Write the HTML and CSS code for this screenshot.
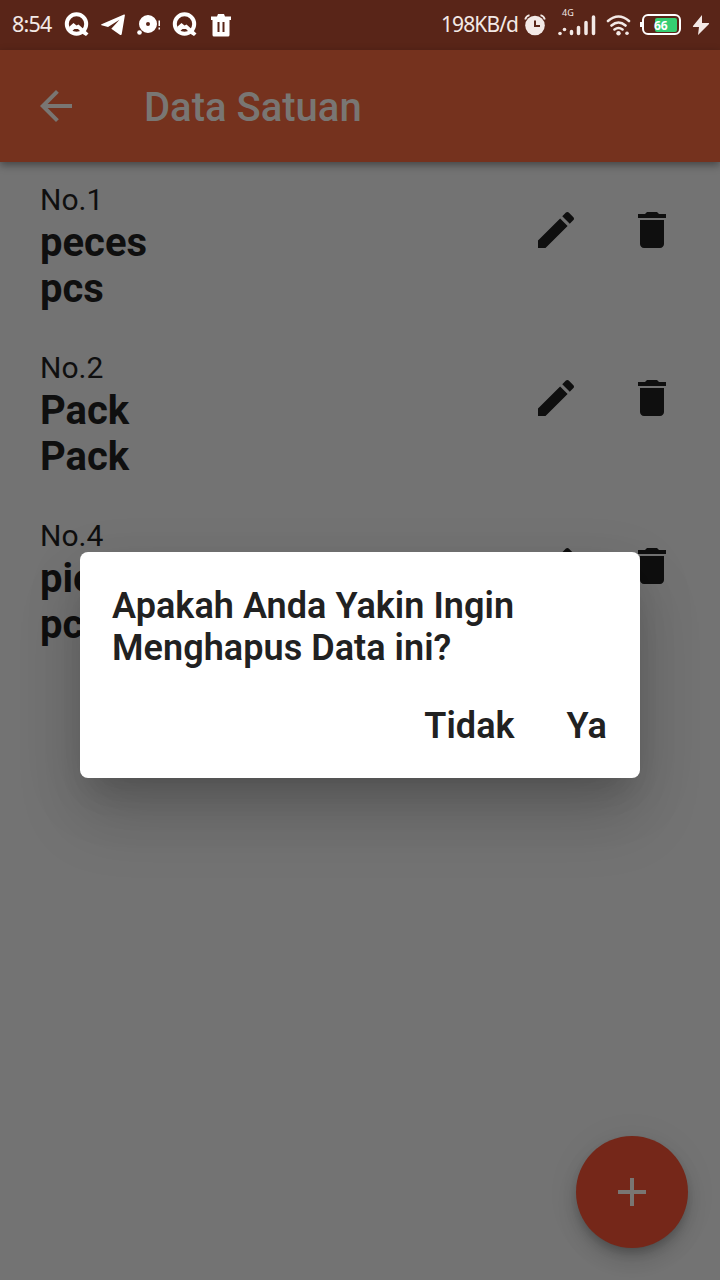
FILE: index.html
```html
<!DOCTYPE html>
<html lang="id">
<head>
<meta charset="utf-8">
<title>Data Satuan</title>
<link rel="stylesheet" href="styles.css">
</head>
<body>
<svg class="symbols" width="0" height="0">
  <symbol id="edit" viewBox="0 0 24 24"><path d="M3 17.25V21h3.75L17.81 9.94l-3.75-3.75L3 17.25zM20.71 7.04c.39-.39.39-1.02 0-1.41l-2.34-2.34c-.39-.39-1.02-.39-1.41 0l-1.83 1.83 3.75 3.75 1.83-1.83z"/></symbol>
  <symbol id="delete" viewBox="0 0 24 24"><path d="M6 19c0 1.100.9 2 2 2h8c1.100 0 2-.9 2-2V7H6v12zM19 4h-3.500l-1-1h-5l-1 1H5v2h14V4z"/></symbol>
  <symbol id="quick" viewBox="0 0 26 26"><circle cx="12.500" cy="12" r="9.700" fill="none" stroke="currentColor" stroke-width="4"/><path d="M5 15l4.500-4 3 2.500 2-1 10 9-2.500 2.500-2.500-1.500-5.500-5.500-3.500 0-3 2.500z"/></symbol>
</svg>
<div class="screen">
  <header class="status">
    <div class="status-left">
      <span class="clock">8:54</span>
      <svg class="q" width="26" height="26"><use href="#quick"/></svg>
      <svg class="plane" width="24" height="22" viewBox="0 0 24 22"><path d="M.5 10.200L23 .5q1-.3.900.7L20.700 20.300q-.3 1.200-1.500.6L10.300 14.800 18.500 5.800 7 13 .5 11.200q-.8-.5 0-1z"/></svg>
      <svg class="disc" width="24" height="20" viewBox="0 0 24 20"><path fill-rule="evenodd" d="M11 0a9 9 0 1 1 0 18a9 9 0 0 1 0-18zM11 7a2 2 0 1 0 0 4a2 2 0 0 0 0-4z"/><circle cx="2.500" cy="17.500" r="2.300"/><path d="M21.500 5.500H23V11h-1.500zM21.500 12.500H23v2h-1.500z"/></svg>
      <svg class="q" width="26" height="26"><use href="#quick"/></svg>
      <svg class="bin" width="20" height="23" viewBox="0 0 20 23"><path fill-rule="evenodd" d="M0 2.500h6L7 0h6l1 2.500h6v3.500h-1.500v15q0 1.500-1.500 1.500H3Q1.500 22.500 1.500 21V6H0zM6.500 8v10h2V8zM11.500 8v10h2V8z"/></svg>
    </div>
    <div class="status-right">
      <span class="speed">198KB/d</span>
      <svg width="22" height="22" viewBox="0 0 22 22"><circle cx="11" cy="11.500" r="9.800"/><path d="M1.200 5.500Q2 2 5.500 1.200M20.800 5.500Q20 2 16.500 1.200" fill="none" stroke="currentColor" stroke-width="1.800"/><path d="M11 6.500v5.500h5" fill="none" stroke="#592518" stroke-width="2"/></svg>
      <div class="signal">
        <span>4G</span>
        <svg width="38" height="21" viewBox="0 0 38 21"><circle cx="2" cy="18.500" r="1.800"/><circle cx="6.500" cy="14.500" r="1.800"/><path d="M13.500 16.500v2M20.500 12.500v6M28 7.500v11M35.500 2v16.500" stroke="currentColor" stroke-width="3.500" stroke-linecap="round"/></svg>
      </div>
      <svg class="wifi" width="26" height="21" viewBox="0 0 26 21"><g fill="none" stroke="currentColor" stroke-width="2.600" stroke-linecap="round"><path d="M2 6Q12.500-3 23 6M5.500 10.500q7-6 14 0M8.500 14.500q4-3 8 0"/></g><circle cx="12.500" cy="18.300" r="2.200"/><circle cx="21" cy="18.300" r="1.800"/></svg>
      <div class="battery"><div class="level">66</div></div>
      <svg class="bolt" width="18" height="20" viewBox="0 0 18 20"><path d="M10 0L1 11q-.5 1 .5 1H7L6 20 17 9q.5-1-.5-1H10z"/></svg>
    </div>
  </header>
  <div class="appbar">
    <svg width="48" height="48" viewBox="0 0 24 24"><path d="M20 11H7.830l5.590-5.590L12 4l-8 8 8 8 1.410-1.410L7.830 13H20v-2z"/></svg>
    <h1>Data Satuan</h1>
  </div>
  <main class="list">
    <div class="item"><div class="text"><p>No.1</p><b>peces</b><b>pcs</b></div><svg><use href="#edit"/></svg><svg><use href="#delete"/></svg></div>
    <div class="item"><div class="text"><p>No.2</p><b>Pack</b><b>Pack</b></div><svg><use href="#edit"/></svg><svg><use href="#delete"/></svg></div>
    <div class="item"><div class="text"><p>No.4</p><b>pieces</b><b>pcs</b></div><svg><use href="#edit"/></svg><svg><use href="#delete"/></svg></div>
  </main>
  <div class="dialog">
    <p>Apakah Anda Yakin Ingin<br>Menghapus Data ini?</p>
    <div class="actions"><span>Tidak</span><span>Ya</span></div>
  </div>
  <div class="fab"><svg width="48" height="48" viewBox="0 0 24 24"><path d="M19 13h-6v6h-2v-6H5v-2h6V5h2v6h6v2z"/></svg></div>
</div>
</body>
</html>
```
FILE: styles.css
```css
* { box-sizing: border-box; }
body { margin: 0; }
p, h1 { margin: 0; }
svg { display: block; flex: none; fill: currentColor; }
.symbols { position: absolute; }
.screen {
  position: relative;
  width: 720px;
  height: 1280px;
  overflow: hidden;
  background: #737373;
  color: #0f0f0f;
  font-family: Roboto, sans-serif;
}
.status {
  display: flex;
  justify-content: space-between;
  height: 50px;
  padding: 0 10px 0 12px;
  background: #592518;
  color: #f3e9e6;
  font-family: "Noto Sans", sans-serif;
}
.status-left, .status-right { display: flex; align-items: center; }
.status-left svg { color: #fff; }
.clock { width: 52px; margin-top: -2px; font-size: 21.500px; letter-spacing: -0.800px; line-height: 28px; }
.plane { margin-left: 11px; }
.disc { margin: 0 11px 0 12px; }
.bin { margin-left: 13px; }
.speed { width: 83px; font-size: 21px; letter-spacing: -0.900px; line-height: 28px; margin-top: -2px; white-space: nowrap; }
.signal { position: relative; margin: 0 10px 0 12px; }
.signal span { position: absolute; left: 4px; top: -7px; font-size: 9px; line-height: 10px; }
.battery {
  position: relative;
  width: 39px;
  height: 21px;
  margin: -1px 11px 0 10px;
  padding: 2px;
  border: 2px solid #fff;
  border-radius: 6px;
}
.battery::before {
  content: "";
  position: absolute;
  left: -4px;
  top: 6px;
  width: 2px;
  height: 5px;
  background: #fff;
}
.level {
  width: 22px;
  height: 14px;
  margin: -0.500px 0 0 9px;
  border-radius: 2px;
  background: #35ce72;
  color: #fff;
  font-size: 12px;
  font-weight: 700;
  line-height: 15px;
  text-indent: -1px;
}
.appbar {
  position: relative;
  display: flex;
  align-items: center;
  gap: 64px;
  height: 112px;
  padding-left: 32px;
  background: #75321e;
  color: #797673;
  box-shadow: 0 3px 8px rgba(0, 0, 0, .4);
}
.appbar h1 { font-size: 40px; font-weight: 500; line-height: 48px; padding-top: 3px; }
.list { padding-top: 20px; }
.item { display: flex; height: 168px; padding: 0 44px 0 40px; }
.item .text { flex: 1; }
.item p { font-size: 30px; line-height: 36px; margin-bottom: 2px; }
.item b { display: block; font-size: 40px; line-height: 46px; }
.item svg { width: 48px; height: 48px; margin-top: 24px; }
.item svg + svg { margin-left: 48px; }
.dialog {
  position: absolute;
  left: 80px;
  top: 552px;
  width: 560px;
  height: 226px;
  padding: 33px 33px 31px 32px;
  border-radius: 8px;
  background: #fff;
  color: #212121;
  font-size: 36px;
  font-weight: 600;
  letter-spacing: .05px;
  line-height: 42px;
  box-shadow: 0 22px 30px -14px rgba(0, 0, 0, .15), 0 40px 66px 0 rgba(0, 0, 0, .14), 0 18px 60px 4px rgba(0, 0, 0, .08);
}
.actions { display: flex; justify-content: flex-end; gap: 52px; margin-top: 36px; }
.fab {
  position: absolute;
  right: 32px;
  bottom: 32px;
  display: grid;
  place-items: center;
  width: 112px;
  height: 112px;
  border-radius: 50%;
  background: #752719;
  color: #797673;
  box-shadow: 0 6px 10px -2px rgba(0, 0, 0, .2), 0 12px 20px rgba(0, 0, 0, .14), 0 2px 36px rgba(0, 0, 0, .06);
}
```
